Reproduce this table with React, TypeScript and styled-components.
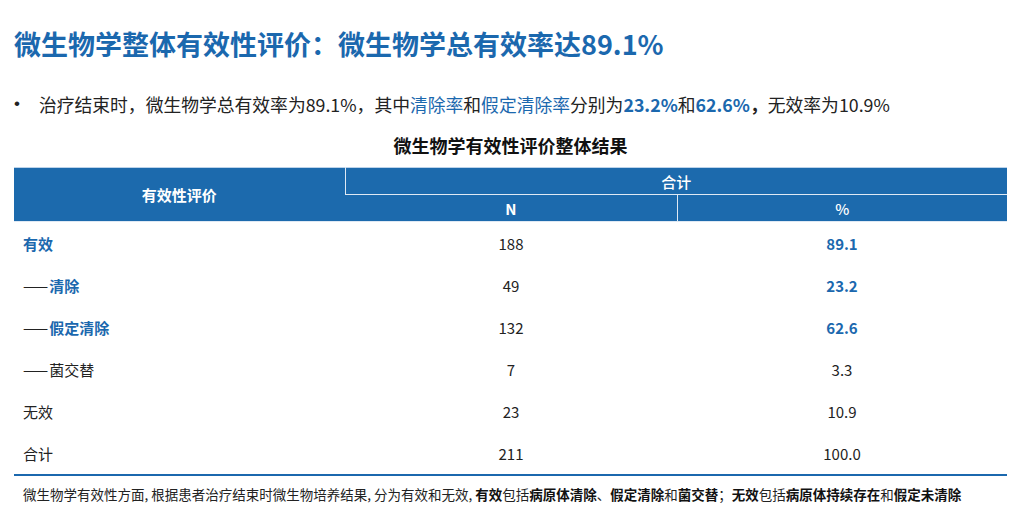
import styled, { createGlobalStyle } from 'styled-components'

const blue = '#1b68ae'
const headBg = '#1c6aad'
const ink = '#222'

const GlobalStyle = createGlobalStyle`
  body {
    margin: 0;
    background: #fff;
    font-family: 'Noto Sans CJK SC', 'Noto Sans', sans-serif;
    color: ${ink};
  }
`

const Page = styled.div`
  width: 1019px;
  height: 526px;
  padding: 28px 12px 0 14px;
  box-sizing: border-box;
  overflow: hidden;
`

const Title = styled.h1`
  margin: 0;
  font-size: 27px;
  line-height: 32px;
  font-weight: 700;
  color: ${blue};
`

const Bullet = styled.div`
  display: flex;
  align-items: center;
  gap: 19px;
  margin-top: 31px;
  font-size: 17.8px;
  line-height: 26px;
  color: ${ink};
`

const Dot = styled.span`
  font-family: 'Liberation Sans', sans-serif;
  font-size: 17px;
`

const Hl = styled.span<{ $bold?: boolean }>`
  color: ${blue};
  font-weight: ${({ $bold }) => ($bold ? 700 : 400)};
`

const Caption = styled.div`
  margin-top: 16px;
  text-align: center;
  font-size: 18px;
  line-height: 24px;
  font-weight: 700;
  color: #111;
`

const Table = styled.table`
  margin-top: 10px;
  width: 993px;
  border-collapse: collapse;
  table-layout: fixed;
  font-size: 15px;
  border-top: 1px solid #bcd3ea;
  border-bottom: 2px solid ${blue};
`

const Th = styled.th<{ $weight?: number }>`
  background: ${headBg};
  color: #fff;
  font-weight: ${({ $weight }) => $weight ?? 500};
  height: 26px;
  padding: 0;
  text-align: center;
  border-left: 1px solid #dfe9f4;
  border-bottom: 1px solid #dfe9f4;
  &:first-child {
    border-left: none;
  }
`

const Td = styled.td<{ $blue?: boolean; $left?: boolean }>`
  height: 42px;
  padding: 0 0 0 ${({ $left }) => ($left ? '9px' : '0')};
  text-align: ${({ $left }) => ($left ? 'left' : 'center')};
  color: ${({ $blue }) => ($blue ? blue : ink)};
  font-weight: ${({ $blue }) => ($blue ? 700 : 400)};
`

const Dash = styled.span`
  color: ${ink};
  font-weight: 400;
  letter-spacing: 2px;
  margin-right: -1px;
`

const Note = styled.div`
  margin-top: 9px;
  padding-left: 9px;
  font-size: 13.5px;
  line-height: 18px;
  color: #222;
  white-space: nowrap;
  b {
    font-weight: 700;
    color: #111;
  }
`

type Row = { label: string; dash?: boolean; hl: boolean; n: string; pct: string; pctHl: boolean }

const rows: Row[] = [
  { label: '有效', hl: true, n: '188', pct: '89.1', pctHl: true },
  { label: '清除', dash: true, hl: true, n: '49', pct: '23.2', pctHl: true },
  { label: '假定清除', dash: true, hl: true, n: '132', pct: '62.6', pctHl: true },
  { label: '菌交替', dash: true, hl: false, n: '7', pct: '3.3', pctHl: false },
  { label: '无效', hl: false, n: '23', pct: '10.9', pctHl: false },
  { label: '合计', hl: false, n: '211', pct: '100.0', pctHl: false },
]

export default function App() {
  return (
    <Page>
      <GlobalStyle />
      <Title>微生物学整体有效性评价：微生物学总有效率达89.1%</Title>
      <Bullet>
        <Dot>•</Dot>
        <span>
          治疗结束时，微生物学总有效率为89.1%，其中<Hl>清除率</Hl>和<Hl>假定清除率</Hl>分别为
          <Hl $bold>23.2%</Hl>和<Hl $bold>62.6%</Hl>
          <b>，</b>无效率为10.9%
        </span>
      </Bullet>
      <Caption>微生物学有效性评价整体结果</Caption>
      <Table>
        <colgroup>
          <col style={{ width: 331 }} />
          <col style={{ width: 332 }} />
          <col style={{ width: 330 }} />
        </colgroup>
        <thead>
          <tr>
            <Th rowSpan={2} $weight={700}>
              有效性评价
            </Th>
            <Th colSpan={2}>合计</Th>
          </tr>
          <tr>
            <Th $weight={700}>N</Th>
            <Th>%</Th>
          </tr>
        </thead>
        <tbody>
          {rows.map((r) => (
            <tr key={r.label}>
              <Td $left $blue={r.hl}>
                {r.dash && <Dash>——</Dash>}
                {r.label}
              </Td>
              <Td>{r.n}</Td>
              <Td $blue={r.pctHl}>{r.pct}</Td>
            </tr>
          ))}
        </tbody>
      </Table>
      <Note>
        微生物学有效性方面, 根据患者治疗结束时微生物培养结果, 分为有效和无效, <b>有效</b>包括<b>病原体清除</b>、
        <b>假定清除</b>和<b>菌交替</b>；<b>无效</b>包括<b>病原体持续存在</b>和<b>假定未清除</b>
      </Note>
    </Page>
  )
}
